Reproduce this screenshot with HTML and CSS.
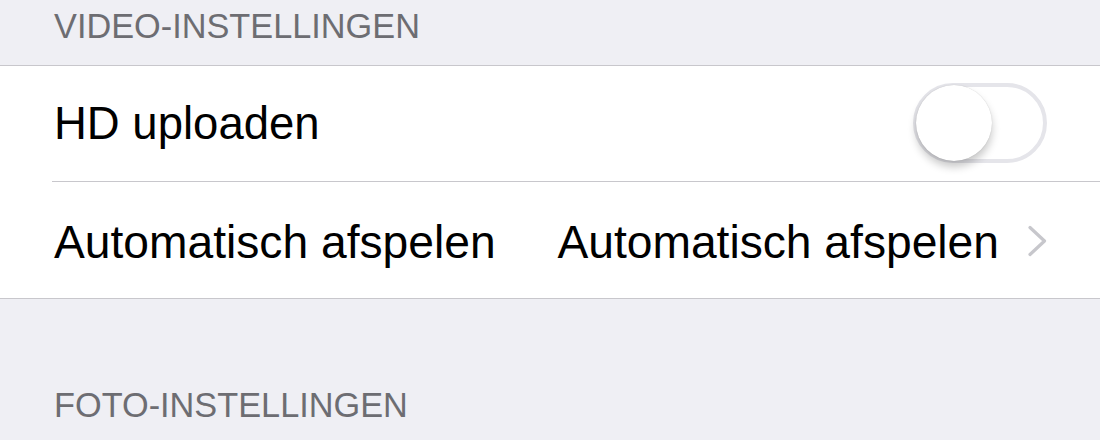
FILE: index.html
```html
<!DOCTYPE html>
<html lang="nl">
<head>
    <meta charset="UTF-8">
    <meta name="viewport" content="width=device-width, initial-scale=1.0">
    <title>Instellingen</title>
    <link rel="stylesheet" href="styles.css">
</head>
<body>

    <div class="section-title">VIDEO-INSTELLINGEN</div>

    <div class="group">
        <div class="row">
            <div class="row-inner">
                <span class="label">HD uploaden</span>
                <div class="switch">
                    <div class="knob"></div>
                </div>
            </div>
        </div>
        <div class="row">
            <div class="row-inner last">
                <span class="label">Automatisch afspelen</span>
                <span class="value">Automatisch afspelen</span>
                <svg class="chevron" width="22" height="34" viewBox="0 0 22 34">
                    <path d="M4 3.5 L18.5 17 L4 30.5" fill="none" stroke="#c7c7cc" stroke-width="3.2" stroke-linecap="round" stroke-linejoin="round"/>
                </svg>
            </div>
        </div>
    </div>

    <div class="section-title lower">FOTO-INSTELLINGEN</div>

</body>
</html>
```

FILE: styles.css
```css
body {
    margin: 0;
    background-color: #efeff4;
    font-family: "Liberation Sans", Arial, sans-serif;
    color: #000;
}

.section-title {
    height: 65px;
    padding-left: 54px;
    font-size: 34.3px;
    line-height: 52px;
    color: #6d6d72;
    box-sizing: border-box;
}

.section-title.lower {
    margin-top: 80px;
    height: 60px;
}

.group {
    background-color: #fff;
    border-top: 1px solid #c8c7cc;
    border-bottom: 1px solid #c8c7cc;
}

.row {
    padding-left: 52px;
}

.row-inner {
    height: 115px;
    display: flex;
    align-items: center;
    padding-right: 53px;
    border-bottom: 1px solid #c8c7cc;
}

.row-inner.last {
    height: 116px;
    border-bottom: none;
}

.label {
    flex: 1;
    padding-left: 2px;
    font-size: 45.5px;
}

.last .label,
.value {
    font-size: 46.2px;
    padding-top: 4px;
}

.value {
    color: #000;
    margin-right: 27px;
}

.chevron {
    display: block;
    margin-right: -1px;
    margin-top: 2px;
}

.switch {
    width: 134px;
    height: 80px;
    box-sizing: border-box;
    border: 4px solid #e5e5ea;
    border-radius: 40px;
    background-color: #fff;
    display: flex;
    align-items: center;
    margin-top: -2px;
}

.knob {
    width: 76px;
    height: 76px;
    border-radius: 50%;
    background-color: #fff;
    margin-left: -1px;
    box-shadow: 0 6px 8px rgba(0, 0, 0, 0.22), 0 0 1px rgba(0, 0, 0, 0.2);
}
```
